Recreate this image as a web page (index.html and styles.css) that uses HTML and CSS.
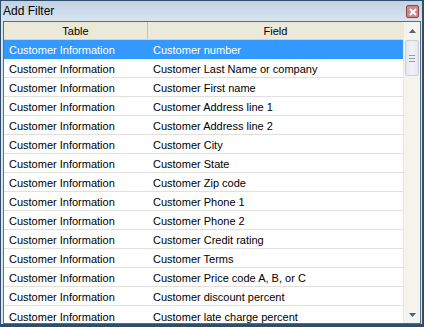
FILE: index.html
```html
<!DOCTYPE html>
<html lang="en">
<head>
    <meta charset="UTF-8">
    <title>Add Filter</title>
    <link rel="stylesheet" href="styles.css">
</head>
<body>
    <div class="window">
        <div class="titlebar">
            <span class="title">Add Filter</span>
            <span class="close">
                <svg width="8" height="8" viewBox="0 0 8 8"><path d="M1 1 L7 7 M7 1 L1 7" stroke="#fff" stroke-width="2"/></svg>
            </span>
        </div>
        <div class="list">
            <div class="grid">
                <div class="head">
                    <div class="col-table">Table</div>
                    <div class="col-field">Field</div>
                </div>
                <div class="row selected"><div class="col-table">Customer Information</div><div class="col-field">Customer number</div></div>
                <div class="row"><div class="col-table">Customer Information</div><div class="col-field">Customer Last Name or company</div></div>
                <div class="row"><div class="col-table">Customer Information</div><div class="col-field">Customer First name</div></div>
                <div class="row"><div class="col-table">Customer Information</div><div class="col-field">Customer Address line 1</div></div>
                <div class="row"><div class="col-table">Customer Information</div><div class="col-field">Customer Address line 2</div></div>
                <div class="row"><div class="col-table">Customer Information</div><div class="col-field">Customer City</div></div>
                <div class="row"><div class="col-table">Customer Information</div><div class="col-field">Customer State</div></div>
                <div class="row"><div class="col-table">Customer Information</div><div class="col-field">Customer Zip code</div></div>
                <div class="row"><div class="col-table">Customer Information</div><div class="col-field">Customer Phone 1</div></div>
                <div class="row"><div class="col-table">Customer Information</div><div class="col-field">Customer Phone 2</div></div>
                <div class="row"><div class="col-table">Customer Information</div><div class="col-field">Customer Credit rating</div></div>
                <div class="row"><div class="col-table">Customer Information</div><div class="col-field">Customer Terms</div></div>
                <div class="row"><div class="col-table">Customer Information</div><div class="col-field">Customer Price code A, B, or C</div></div>
                <div class="row"><div class="col-table">Customer Information</div><div class="col-field">Customer discount percent</div></div>
                <div class="row last"><div class="col-table">Customer Information</div><div class="col-field">Customer late charge percent</div></div>
            </div>
            <div class="scrollbar">
                <div class="arrow">
                    <svg width="7" height="4" viewBox="0 0 7 4"><path d="M0 4 L3.5 0 L7 4 Z" fill="#4d6185"/></svg>
                </div>
                <div class="thumb">
                    <span class="grip"></span>
                    <span class="grip"></span>
                    <span class="grip"></span>
                </div>
                <div class="track"></div>
                <div class="arrow">
                    <svg width="7" height="4" viewBox="0 0 7 4"><path d="M0 0 L3.5 4 L7 0 Z" fill="#4d6185"/></svg>
                </div>
            </div>
        </div>
    </div>
</body>
</html>
```

FILE: styles.css
```css
body {
    margin: 0;
    padding: 0;
    font-family: "Liberation Sans", Arial, sans-serif;
}
.window {
    width: 424px;
    height: 327px;
    box-sizing: border-box;
    border: 1px solid #2f4e6b;
    border-bottom-width: 3px;
    border-right-width: 2px;
    background: linear-gradient(to bottom, #c1d2e4, #d8e4f0 20px, #dce6f1);
    display: flex;
    flex-direction: column;
}
.titlebar {
    height: 20px;
    display: flex;
    align-items: center;
    justify-content: space-between;
    padding: 0 3px 0 2px;
}
.title {
    font-size: 12px;
    color: #000;
}
.close {
    width: 11px;
    height: 11px;
    border: 1px solid #8a4a44;
    border-radius: 2px;
    background: #c98a86;
    display: flex;
    align-items: center;
    justify-content: center;
    margin-top: 1px;
}
.list {
    flex: 1;
    margin: 0 1px 0 2px;
    border: 1px solid #5d6b7a;
    background: #fff;
    display: flex;
    overflow: hidden;
}
.grid {
    flex: 1;
    overflow: hidden;
}
.head {
    height: 17px;
    display: flex;
    background: #ece9d8;
    border-bottom: 1px solid #d6d2c2;
    font-size: 11px;
    color: #000;
}
.head .col-table,
.head .col-field {
    text-align: center;
    padding: 1px 0 0 0;
    line-height: 16px;
}
.head .col-table {
    width: 144px;
    border-right: 1px solid #c5c2b2;
}
.col-table {
    width: 143px;
    padding-left: 5px;
    box-sizing: border-box;
    flex-shrink: 0;
}
.col-field {
    flex: 1;
    padding-left: 6px;
}
.row {
    height: 19px;
    box-sizing: border-box;
    display: flex;
    align-items: center;
    padding-top: 2px;
    border-bottom: 1px solid #e2e0da;
    font-size: 11px;
    color: #000;
}
.row.selected {
    background: #3399ff;
    color: #fff;
    border-bottom-color: #3399ff;
}
.row.last {
    border-bottom: none;
}
.scrollbar {
    width: 16px;
    background: #f4f3ee;
    border-left: 1px solid #e8e7e0;
    display: flex;
    flex-direction: column;
}
.arrow {
    height: 17px;
    display: flex;
    align-items: center;
    justify-content: center;
}
.thumb {
    height: 34px;
    margin: 1px 1px 0 1px;
    border: 1px solid #c9d0dd;
    border-radius: 2px;
    background: linear-gradient(to right, #e2e6ee, #f1f3f7 50%, #e2e6ee);
    display: flex;
    flex-direction: column;
    align-items: center;
    justify-content: center;
    gap: 2px;
}
.grip {
    width: 6px;
    height: 1px;
    background: #8f9aae;
}
.track {
    flex: 1;
}
```
